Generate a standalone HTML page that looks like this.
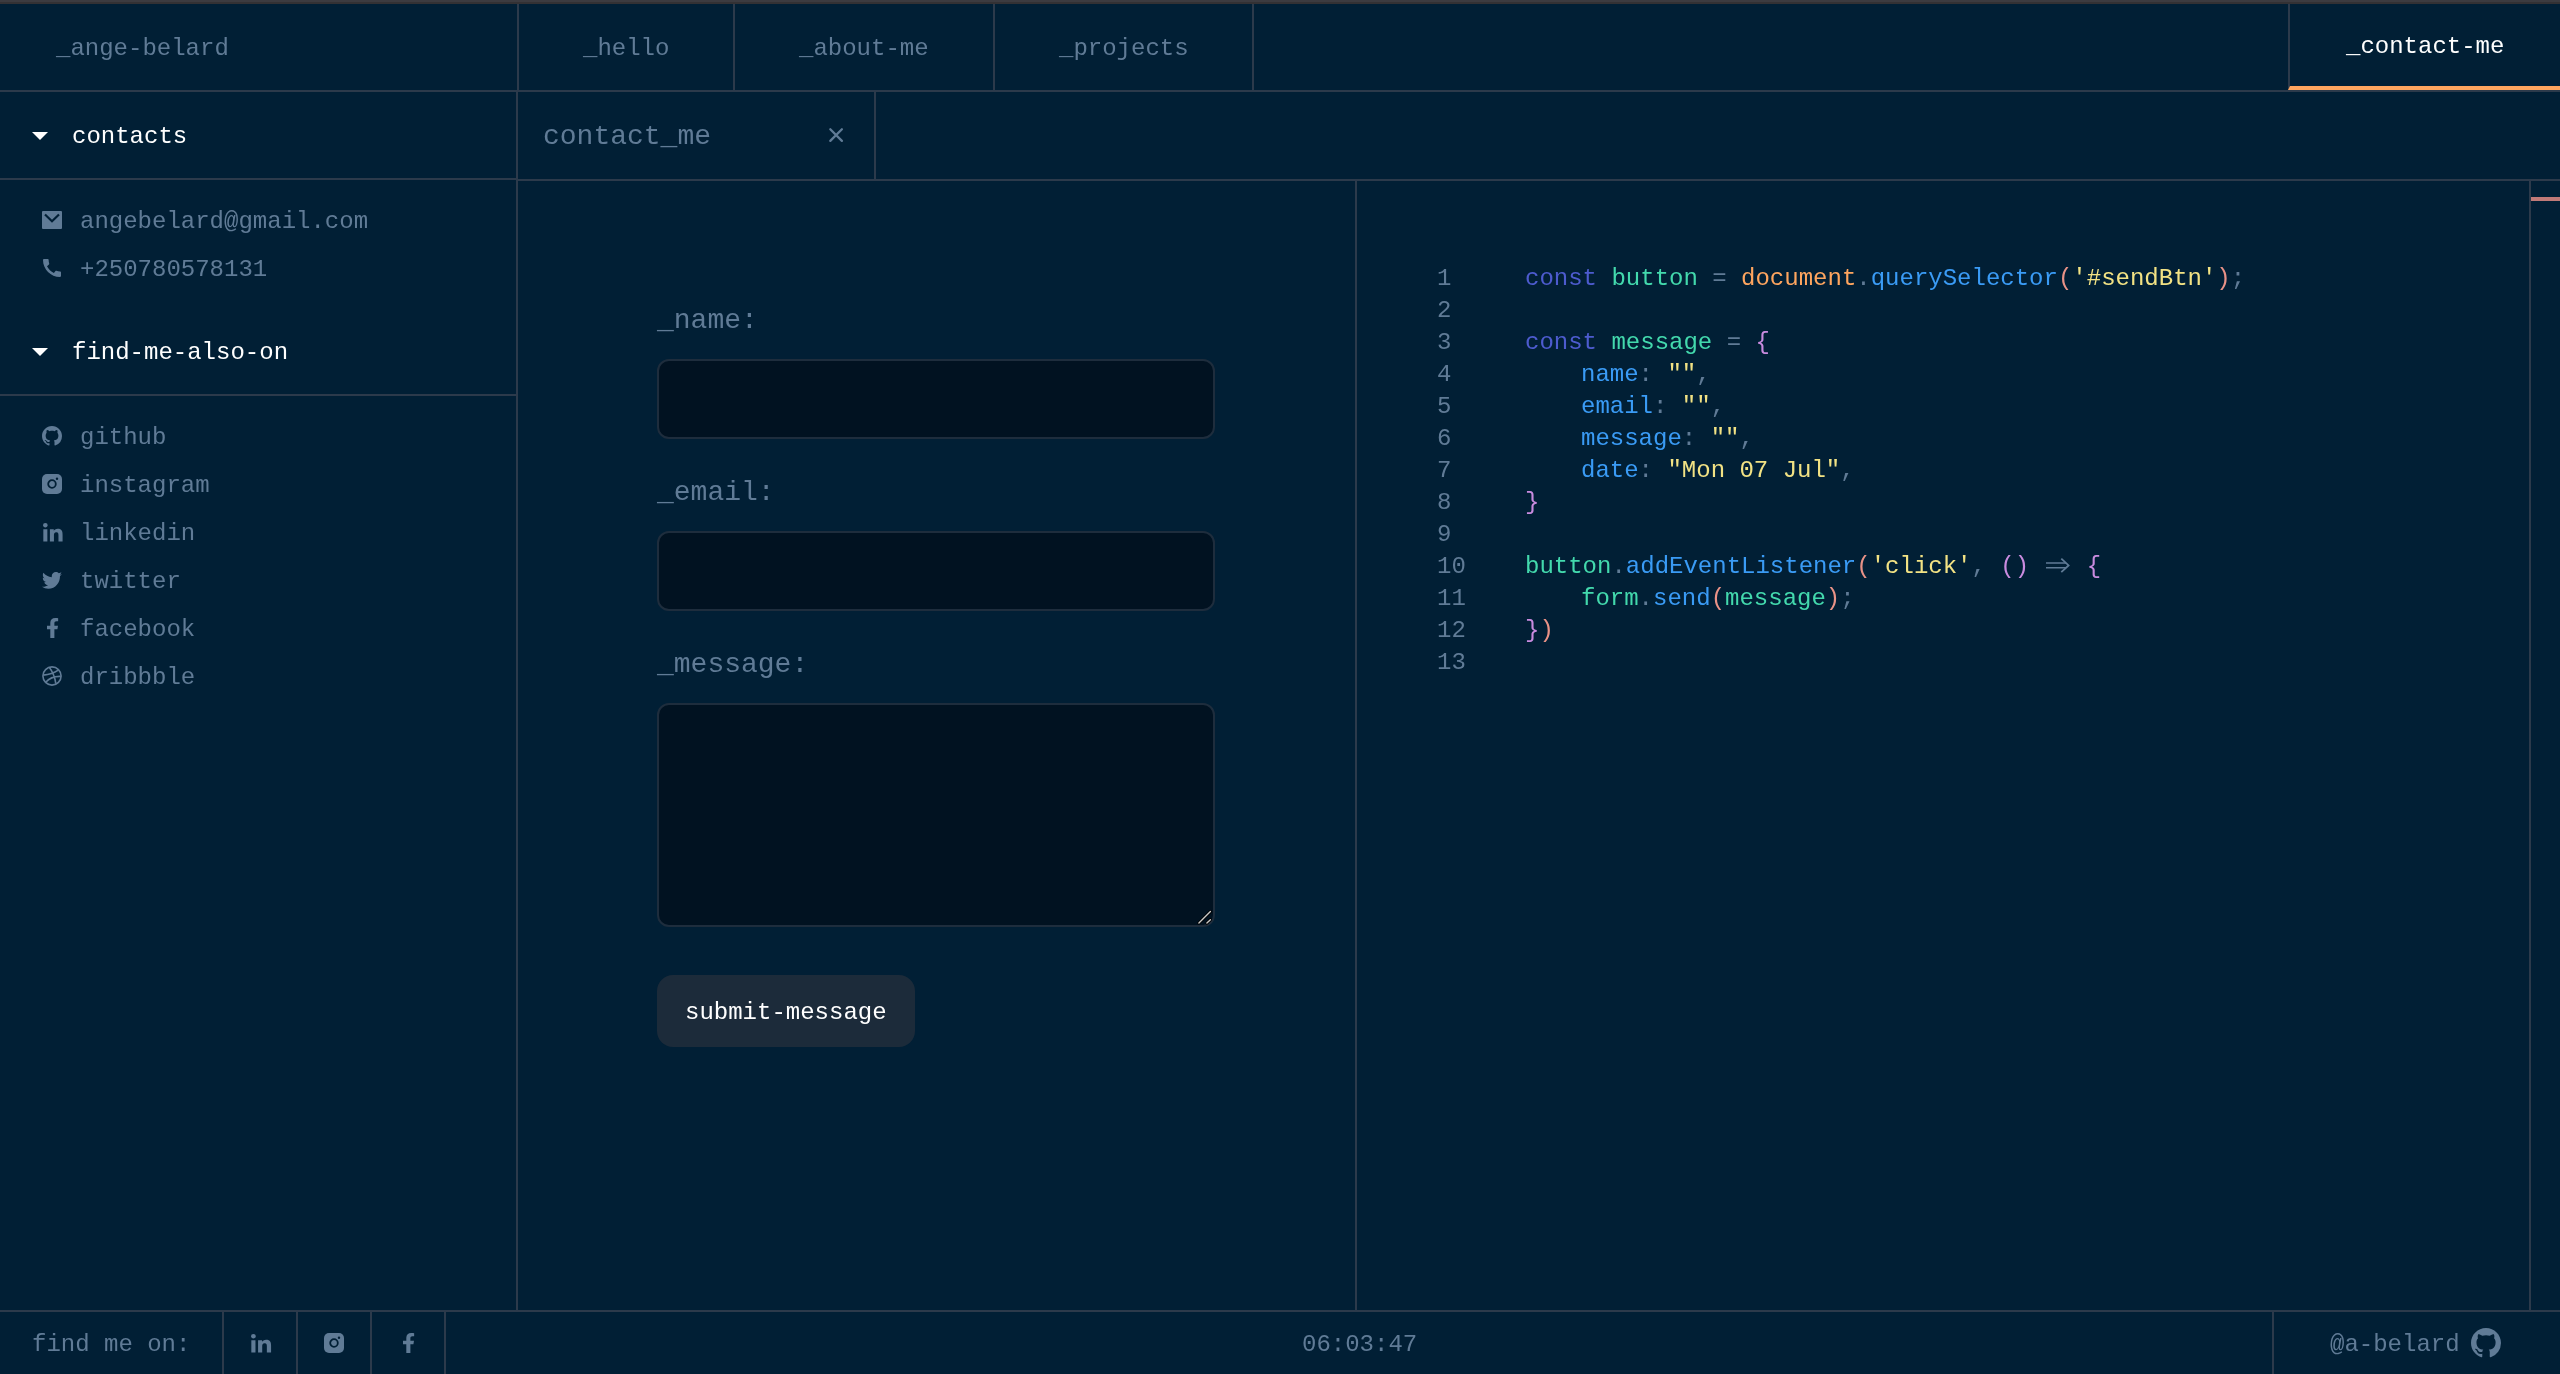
<!DOCTYPE html>
<html><head><meta charset="utf-8">
<style>
html,body{margin:0;padding:0;}
body{width:2560px;height:1374px;overflow:hidden;background:#011f35;position:relative;font-family:"Liberation Mono",monospace;}
.a{position:absolute;}
.hl{position:absolute;background:#2c3a4b;height:2px;}
.vl{position:absolute;background:#2c3a4b;width:2px;}
.t{position:absolute;white-space:pre;will-change:transform;font-size:24px;line-height:32px;color:#607b96;}
.t28{font-size:28px;}
.w{color:#ffffff;}
svg{position:absolute;overflow:visible;}
.inp{position:absolute;box-sizing:border-box;border:2px solid #1e2d3d;background:#011221;border-radius:12px;}
</style></head>
<body>
<!-- top strip -->
<div class="a" style="left:0;top:0;width:2560px;height:2px;background:#3c3b40"></div>
<div class="a" style="left:0;top:2px;width:2560px;height:2px;background:#333134"></div>

<!-- header -->
<div class="hl" style="left:0;top:90px;width:2560px"></div>
<div class="vl" style="left:517px;top:4px;height:86px"></div>
<div class="vl" style="left:733px;top:4px;height:86px"></div>
<div class="vl" style="left:993px;top:4px;height:86px"></div>
<div class="vl" style="left:1252px;top:4px;height:86px"></div>
<div class="a" style="left:2288px;top:4px;width:270px;height:82px;border-left:2px solid #2c3a4b;border-bottom:4px solid #fea55f"></div>
<div class="t" id="t_name" style="left:56px;top:33px">_ange-belard</div>
<div class="t" style="left:583px;top:33px">_hello</div>
<div class="t" style="left:799px;top:33px">_about-me</div>
<div class="t" style="left:1059px;top:33px">_projects</div>
<div class="t w" style="left:2346px;top:31px">_contact-me</div>

<!-- second row -->
<div class="hl" style="left:0;top:178px;width:516px"></div>
<div class="hl" style="left:518px;top:179px;width:2042px"></div>
<div class="vl" style="left:516px;top:92px;height:1218px"></div>
<div class="vl" style="left:874px;top:92px;height:87px"></div>
<svg style="left:32px;top:132px" width="16" height="8"><path d="M0 0H16L8 8Z" fill="#fff"/></svg>
<div class="t w" style="left:72px;top:121px">contacts</div>
<div class="t t28" style="left:543px;top:121px">contact_me</div>
<svg style="left:829px;top:128px" width="14" height="14"><path d="M1.3 1.3L12.9 12.9M12.9 1.3L1.3 12.9" stroke="#607b96" stroke-width="2.3" stroke-linecap="round"/></svg>

<!-- contacts -->
<svg style="left:42px;top:211px" width="20" height="18"><rect x="0" y="0" width="20" height="18" rx="1" fill="#607b96"/><path d="M3 3.5L10 10.2L17 3.5" fill="none" stroke="#011f35" stroke-width="2.2"/></svg>
<div class="t" style="left:80px;top:206px">angebelard@gmail.com</div>
<svg style="left:40px;top:256px" width="24" height="24" viewBox="0 0 24 24"><path fill="#607b96" d="M20.01 15.38c-1.23 0-2.42-.2-3.53-.56-.35-.12-.74-.03-1.01.24l-1.57 1.970c-2.83-1.35-5.48-3.9-6.89-6.83l1.95-1.66c.27-.28.35-.67.24-1.02-.37-1.11-.56-2.3-.56-3.53 0-.54-.45-.99-.99-.99H4.19C3.65 3 3 3.24 3 3.99 3 13.28 10.73 21 20.01 21c.71 0 .99-.63.99-1.180v-3.45c0-.54-.45-.99-.99-.99z"/></svg>
<div class="t" style="left:80px;top:254px">+250780578131</div>

<!-- find me also on -->
<svg style="left:32px;top:348px" width="16" height="8"><path d="M0 0H16L8 8Z" fill="#fff"/></svg>
<div class="t w" style="left:72px;top:337px">find-me-also-on</div>
<div class="hl" style="left:0;top:394px;width:516px"></div>

<svg style="left:42px;top:426px" width="20" height="20" viewBox="0 0 16 16"><path fill="#607b96" d="M8 0C3.58 0 0 3.580 0 8c0 3.54 2.29 6.53 5.47 7.59.4.07.55-.17.55-.38 0-.19-.01-.82-.01-1.49-2.010.37-2.53-.49-2.69-.94-.09-.23-.48-.94-.82-1.13-.28-.15-.68-.52-.01-.53.63-.01 1.08.58 1.23.82.72 1.21 1.87.87 2.33.66.07-.52.28-.87.51-1.07-1.78-.2-3.64-.89-3.64-3.95 0-.87.31-1.59.82-2.15-.08-.2-.36-1.02.08-2.12 0 0 .67-.21 2.2.82.64-.18 1.32-.27 2-.27.68 0 1.36.09 2 .27 1.53-1.04 2.2-.82 2.2-.82.44 1.1.16 1.92.08 2.12.51.56.82 1.27.82 2.15 0 3.07-1.87 3.75-3.65 3.95.29.25.54.73.54 1.48 0 1.07-.01 1.93-.01 2.2 0 .21.15.46.55.38A8.013 8.013 0 0016 8c0-4.42-3.58-8-8-8z"/></svg>
<div class="t" style="left:80px;top:422px">github</div>
<svg style="left:42px;top:474px" width="20" height="20"><rect width="20" height="20" rx="5" fill="#607b96"/><circle cx="10" cy="10" r="3.8" fill="none" stroke="#011f35" stroke-width="1.8"/><circle cx="15" cy="4.8" r="1.2" fill="#011f35"/></svg>
<div class="t" style="left:80px;top:470px">instagram</div>
<svg style="left:42.5px;top:523px" width="19.5" height="18.5" viewBox="0 0 448 448" preserveAspectRatio="none"><path fill="#607b96" d="M100.28 448H7.4V148.9h92.88zM53.79 108.1C24.09 108.1 0 83.5 0 53.8a53.79 53.79 0 0 1 107.58 0c0 29.7-24.1 54.3-53.79 54.3zM447.9 448h-92.68V302.4c0-34.7-.7-79.2-48.29-79.2-48.29 0-55.69 37.7-55.690 76.7V448h-92.78V148.9h89.08v40.8h1.3c12.4-24.1 43.5-49.3 89.6-49.3 94 0 111.28 61.9 111.28 142.3V448z"/></svg>
<div class="t" style="left:80px;top:518px">linkedin</div>
<svg style="left:42px;top:571.5px" width="20" height="16.7" viewBox="0 48 512 416" preserveAspectRatio="none"><path fill="#607b96" d="M459.37 151.716c.325 4.548.325 9.097.325 13.645 0 138.72-105.583 298.558-298.558 298.558-59.452 0-114.68-17.219-161.137-47.106 8.447.974 16.568 1.299 25.34 1.299 49.055 0 94.213-16.568 130.274-44.832-46.132-.975-84.792-31.188-98.112-72.772 6.498.974 12.995 1.624 19.818 1.624 9.421 0 18.843-1.3 27.614-3.573-48.081-9.747-84.143-51.98-84.143-102.985v-1.299c13.969 7.797 30.214 12.67 47.431 13.319-28.264-18.843-46.781-51.005-46.781-87.391 0-19.492 5.197-37.36 14.294-52.954 51.655 63.675 129.3 105.258 216.365 109.807-1.624-7.797-2.599-15.918-2.599-24.04 0-57.828 46.782-104.934 104.934-104.934 30.213 0 57.502 12.67 76.67 33.137 23.715-4.548 46.456-13.32 66.599-25.34-7.798 24.366-22.742 44.833-42.236 58.802 18.843-1.624 37.36-6.822 54.578-14.294-12.995 18.843-29.239 35.736-47.756 49.055z"/></svg>
<div class="t" style="left:80px;top:566px">twitter</div>
<svg style="left:47px;top:618px" width="11" height="20" viewBox="22.89 0 270.47 512" preserveAspectRatio="none"><path fill="#607b96" d="M279.14 288l14.22-92.66h-88.91v-60.13c0-25.35 12.42-50.06 52.24-50.06h40.42V6.26S260.43 0 225.36 0c-73.22 0-121.08 44.38-121.08 124.72v70.62H22.89V288h81.39v224h100.17V288z"/></svg>
<div class="t" style="left:80px;top:614px">facebook</div>
<svg style="left:42px;top:666px" width="20" height="20"><circle cx="10" cy="10" r="9.1" fill="none" stroke="#607b96" stroke-width="1.6"/><path d="M7.2 1.3Q12.5 8 13.8 17.6M1.3 9.1Q10 8.2 16.3 4.1M3.7 16.3Q9 10 18.8 10.4" fill="none" stroke="#607b96" stroke-width="1.6"/></svg>
<div class="t" style="left:80px;top:662px">dribbble</div>

<!-- form -->
<div class="vl" style="left:1355px;top:181px;height:1129px"></div>
<div class="t t28" style="left:657px;top:305px">_name:</div>
<div class="inp" style="left:657px;top:359px;width:558px;height:80px"></div>
<div class="t t28" style="left:657px;top:477px">_email:</div>
<div class="inp" style="left:657px;top:531px;width:558px;height:80px"></div>
<div class="t t28" style="left:657px;top:649px">_message:</div>
<div class="inp" style="left:657px;top:703px;width:558px;height:224px"></div>
<svg style="left:1190px;top:904px" width="26" height="26"><path d="M8.9 19L20.4 7.6M16.9 19.1L20.4 15.7" stroke="#000" stroke-width="3" stroke-linecap="round"/><path d="M8.9 19L20.4 7.6M16.9 19.1L20.4 15.7" stroke="#c8c8c8" stroke-width="1.4" stroke-linecap="round"/></svg>
<div class="a" style="left:657px;top:975px;width:258px;height:72px;background:#1c2b3a;border-radius:16px"></div>
<div class="t w" style="left:685px;top:997px">submit-message</div>

<!-- code -->
<div class="vl" style="left:2529px;top:181px;height:1129px"></div>
<div class="a" style="left:2531px;top:197px;width:29px;height:4px;background:#c07a78"></div>
<div class="t" style="left:1437px;top:263px;line-height:32px">1
2
3
4
5
6
7
8
9
10
11
12
13</div>
<div class="t" style="left:1525px;top:263px;line-height:32px"><span style="color:#4d5bce">const</span> <span style="color:#43d9ad">button</span> = <span style="color:#fea55f">document</span>.<span style="color:#3a9bf5">querySelector</span><span style="color:#e99287">(</span><span style="color:#f2e284">'#sendBtn'</span><span style="color:#e99287">)</span>;

<span style="color:#4d5bce">const</span> <span style="color:#43d9ad">message</span> = <span style="color:#c98bdf">{</span>
<span style="display:inline-block;width:56px"></span><span style="color:#3a9bf5">name</span>: <span style="color:#f2e284">""</span>,
<span style="display:inline-block;width:56px"></span><span style="color:#3a9bf5">email</span>: <span style="color:#f2e284">""</span>,
<span style="display:inline-block;width:56px"></span><span style="color:#3a9bf5">message</span>: <span style="color:#f2e284">""</span>,
<span style="display:inline-block;width:56px"></span><span style="color:#3a9bf5">date</span>: <span style="color:#f2e284">"Mon 07 Jul"</span>,
<span style="color:#c98bdf">}</span>

<span style="color:#43d9ad">button</span>.<span style="color:#3a9bf5">addEventListener</span><span style="color:#e99287">(</span><span style="color:#f2e284">'click'</span>, <span style="color:#c98bdf">()</span>    <span style="color:#c98bdf">{</span>
<span style="display:inline-block;width:56px"></span><span style="color:#43d9ad">form</span>.<span style="color:#3a9bf5">send</span><span style="color:#e99287">(</span><span style="color:#43d9ad">message</span><span style="color:#e99287">)</span>;
<span style="color:#c98bdf">}</span><span style="color:#e99287">)</span>
</div>

<svg style="left:2044px;top:551px" width="29" height="32"><path d="M2 12.05H22M2 16.75H22" stroke="#607b96" stroke-width="1.5"/><path d="M17.3 7.6L24.6 14.4L17.3 21.2" fill="none" stroke="#607b96" stroke-width="1.8"/></svg>
<!-- footer -->
<div class="hl" style="left:0;top:1310px;width:2560px"></div>
<div class="vl" style="left:222px;top:1312px;height:62px"></div>
<div class="vl" style="left:296px;top:1312px;height:62px"></div>
<div class="vl" style="left:370px;top:1312px;height:62px"></div>
<div class="vl" style="left:444px;top:1312px;height:62px"></div>
<div class="vl" style="left:2272px;top:1312px;height:62px"></div>
<div class="t" style="left:32px;top:1329px">find me on:</div>
<svg style="left:251px;top:1334px" width="20" height="18.5" viewBox="0 0 448 448" preserveAspectRatio="none"><path fill="#607b96" d="M100.28 448H7.4V148.9h92.88zM53.79 108.1C24.09 108.1 0 83.5 0 53.8a53.79 53.79 0 0 1 107.58 0c0 29.7-24.1 54.3-53.79 54.3zM447.9 448h-92.68V302.4c0-34.7-.7-79.2-48.29-79.2-48.29 0-55.69 37.7-55.690 76.7V448h-92.78V148.9h89.08v40.8h1.3c12.4-24.1 43.5-49.3 89.6-49.3 94 0 111.28 61.9 111.28 142.3V448z"/></svg>
<svg style="left:324px;top:1333px" width="20" height="20"><rect width="20" height="20" rx="5" fill="#607b96"/><circle cx="10" cy="10" r="3.8" fill="none" stroke="#011f35" stroke-width="1.8"/><circle cx="15" cy="4.8" r="1.2" fill="#011f35"/></svg>
<svg style="left:403px;top:1333px" width="11" height="20" viewBox="22.89 0 270.47 512" preserveAspectRatio="none"><path fill="#607b96" d="M279.14 288l14.22-92.66h-88.91v-60.13c0-25.35 12.42-50.06 52.24-50.06h40.42V6.26S260.43 0 225.36 0c-73.22 0-121.08 44.38-121.08 124.72v70.62H22.89V288h81.39v224h100.17V288z"/></svg>
<div class="t" style="left:1302px;top:1329px">06:03:47</div>
<div class="t" style="left:2330px;top:1329px">@a-belard</div>
<svg style="left:2471px;top:1328px" width="30" height="30" viewBox="0 0 16 16"><path fill="#607b96" d="M8 0C3.58 0 0 3.580 0 8c0 3.54 2.29 6.53 5.47 7.59.4.07.55-.17.55-.38 0-.19-.01-.82-.01-1.49-2.010.37-2.53-.49-2.69-.94-.09-.23-.48-.94-.82-1.13-.28-.15-.68-.52-.01-.53.63-.01 1.08.58 1.23.82.72 1.21 1.87.87 2.33.66.07-.52.28-.87.51-1.07-1.78-.2-3.64-.89-3.64-3.95 0-.87.31-1.59.82-2.15-.08-.2-.36-1.02.08-2.12 0 0 .67-.21 2.2.82.64-.18 1.32-.27 2-.27.68 0 1.36.09 2 .27 1.53-1.04 2.2-.82 2.2-.82.44 1.1.16 1.92.08 2.12.51.56.82 1.27.82 2.15 0 3.07-1.87 3.75-3.65 3.95.29.25.54.73.54 1.48 0 1.07-.01 1.93-.01 2.2 0 .21.15.46.55.38A8.013 8.013 0 0016 8c0-4.42-3.58-8-8-8z"/></svg>
</body></html>
